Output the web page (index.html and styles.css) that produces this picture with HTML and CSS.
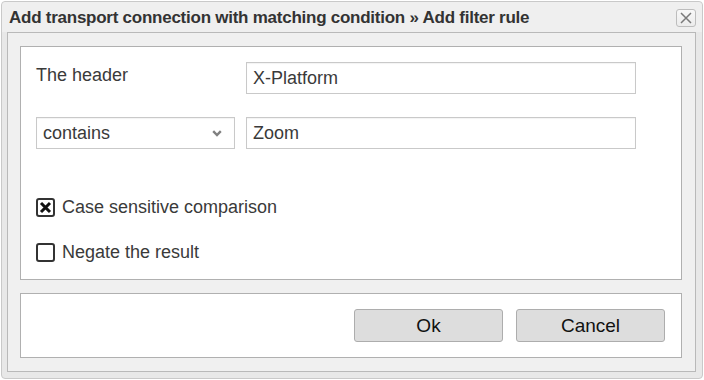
FILE: index.html
```html
<!DOCTYPE html>
<html>
<head>
<meta charset="utf-8">
<link rel="stylesheet" href="styles.css">
</head>
<body>
<div class="window">
  <div class="titlebar">
    <span class="title">Add transport connection with matching condition » Add filter rule</span>
    <span class="close">
      <svg width="12" height="12" viewBox="0 0 12 12"><path d="M1 1L11 11M11 1L1 11" stroke="#7a7a7a" stroke-width="1.5" fill="none"/></svg>
    </span>
  </div>
  <div class="inner">
    <div class="box box-main">
      <div class="row">
        <div class="label">The header</div>
        <div class="field">X-Platform</div>
      </div>
      <div class="row row2">
        <div class="select">contains
          <svg class="chev" width="10" height="7" viewBox="0 0 10 7"><path d="M1.2 1.2L5 5L8.8 1.2" stroke="#808080" stroke-width="2.4" fill="none"/></svg>
        </div>
        <div class="field">Zoom</div>
      </div>
      <div class="check check1">
        <span class="cb checked">
          <svg width="13" height="13" viewBox="0 0 13 13"><path d="M2 2L11 11M11 2L2 11" stroke="#111" stroke-width="3" fill="none"/></svg>
        </span>
        <span class="cb-label">Case sensitive comparison</span>
      </div>
      <div class="check check2">
        <span class="cb"></span>
        <span class="cb-label">Negate the result</span>
      </div>
    </div>
    <div class="box box-buttons">
      <div class="btn">Ok</div>
      <div class="btn">Cancel</div>
    </div>
  </div>
</div>
</body>
</html>
```
FILE: styles.css
```css
html, body {
  margin: 0;
  padding: 0;
  background: #ffffff;
}
body {
  font-family: "Liberation Sans", Arial, sans-serif;
  color: #333;
}
.window {
  box-sizing: border-box;
  margin: 1px 0 0 1px;
  width: 702px;
  height: 378px;
  border: 1px solid #c9c9c9;
  border-radius: 4px;
  background: #e8e8e8;
  padding: 0 6px 6px 5px;
  display: flex;
  flex-direction: column;
}
.titlebar {
  height: 30px;
  display: flex;
  align-items: center;
  justify-content: space-between;
  background: #efefef;
  margin: 0 -6px 0 -5px;
  padding: 0 6px 0 7px;
  border-radius: 4px 4px 0 0;
}
.title {
  font-size: 17px;
  font-weight: bold;
  letter-spacing: -0.25px;
  color: #333;
  margin-top: 1px;
}
.close {
  box-sizing: border-box;
  width: 20px;
  height: 18px;
  border: 1px solid #bdbdbd;
  border-radius: 3px;
  background: linear-gradient(#f8f8f8, #ececec);
  display: flex;
  align-items: center;
  justify-content: center;
  margin-top: 1px;
}
.inner {
  flex: 1;
  box-sizing: border-box;
  border: 1px solid #b9b9b9;
  background: #f0f0f0;
  padding: 13px 13px 13px 12px;
  display: flex;
  flex-direction: column;
  gap: 13px;
}
.box {
  box-sizing: border-box;
  border: 1px solid #b0b0b0;
  background: #ffffff;
}
.box-main {
  height: 234px;
  padding: 15px 0 0 15px;
}
.row {
  display: flex;
  gap: 11px;
  height: 32px;
}
.row2 {
  margin-top: 23px;
}
.label {
  width: 199px;
  font-size: 18px;
  line-height: 27px;
  color: #3a3a3a;
}
.field, .select {
  box-sizing: border-box;
  height: 32px;
  border: 1px solid #c9c9c9;
  box-shadow: inset 0 1px 1px rgba(0, 0, 0, 0.05);
  font-size: 18px;
  line-height: 30px;
  color: #3a3a3a;
  padding-left: 6px;
  background: #fff;
}
.field {
  width: 390px;
}
.select {
  width: 199px;
  padding-left: 6px;
  display: flex;
  justify-content: space-between;
  align-items: center;
  padding-right: 12px;
}
.chev {
  margin-top: 1px;
}
.check {
  display: flex;
  align-items: center;
  gap: 7px;
  height: 19px;
}
.check1 {
  margin-top: 49px;
}
.check2 {
  margin-top: 26px;
}
.cb {
  box-sizing: border-box;
  width: 19px;
  height: 19px;
  border: 2px solid #333;
  border-radius: 3px;
  background: #fff;
  display: flex;
  align-items: center;
  justify-content: center;
}
.cb-label {
  font-size: 18px;
  color: #3a3a3a;
}
.box-buttons {
  height: 65px;
  display: flex;
  justify-content: flex-end;
  align-items: center;
  gap: 13px;
  padding-right: 16px;
}
.btn {
  box-sizing: border-box;
  width: 149px;
  height: 33px;
  border: 1px solid #adadad;
  border-radius: 3px;
  background: #dddddd;
  font-size: 19px;
  line-height: 31px;
  text-align: center;
  color: #111;
}
```
